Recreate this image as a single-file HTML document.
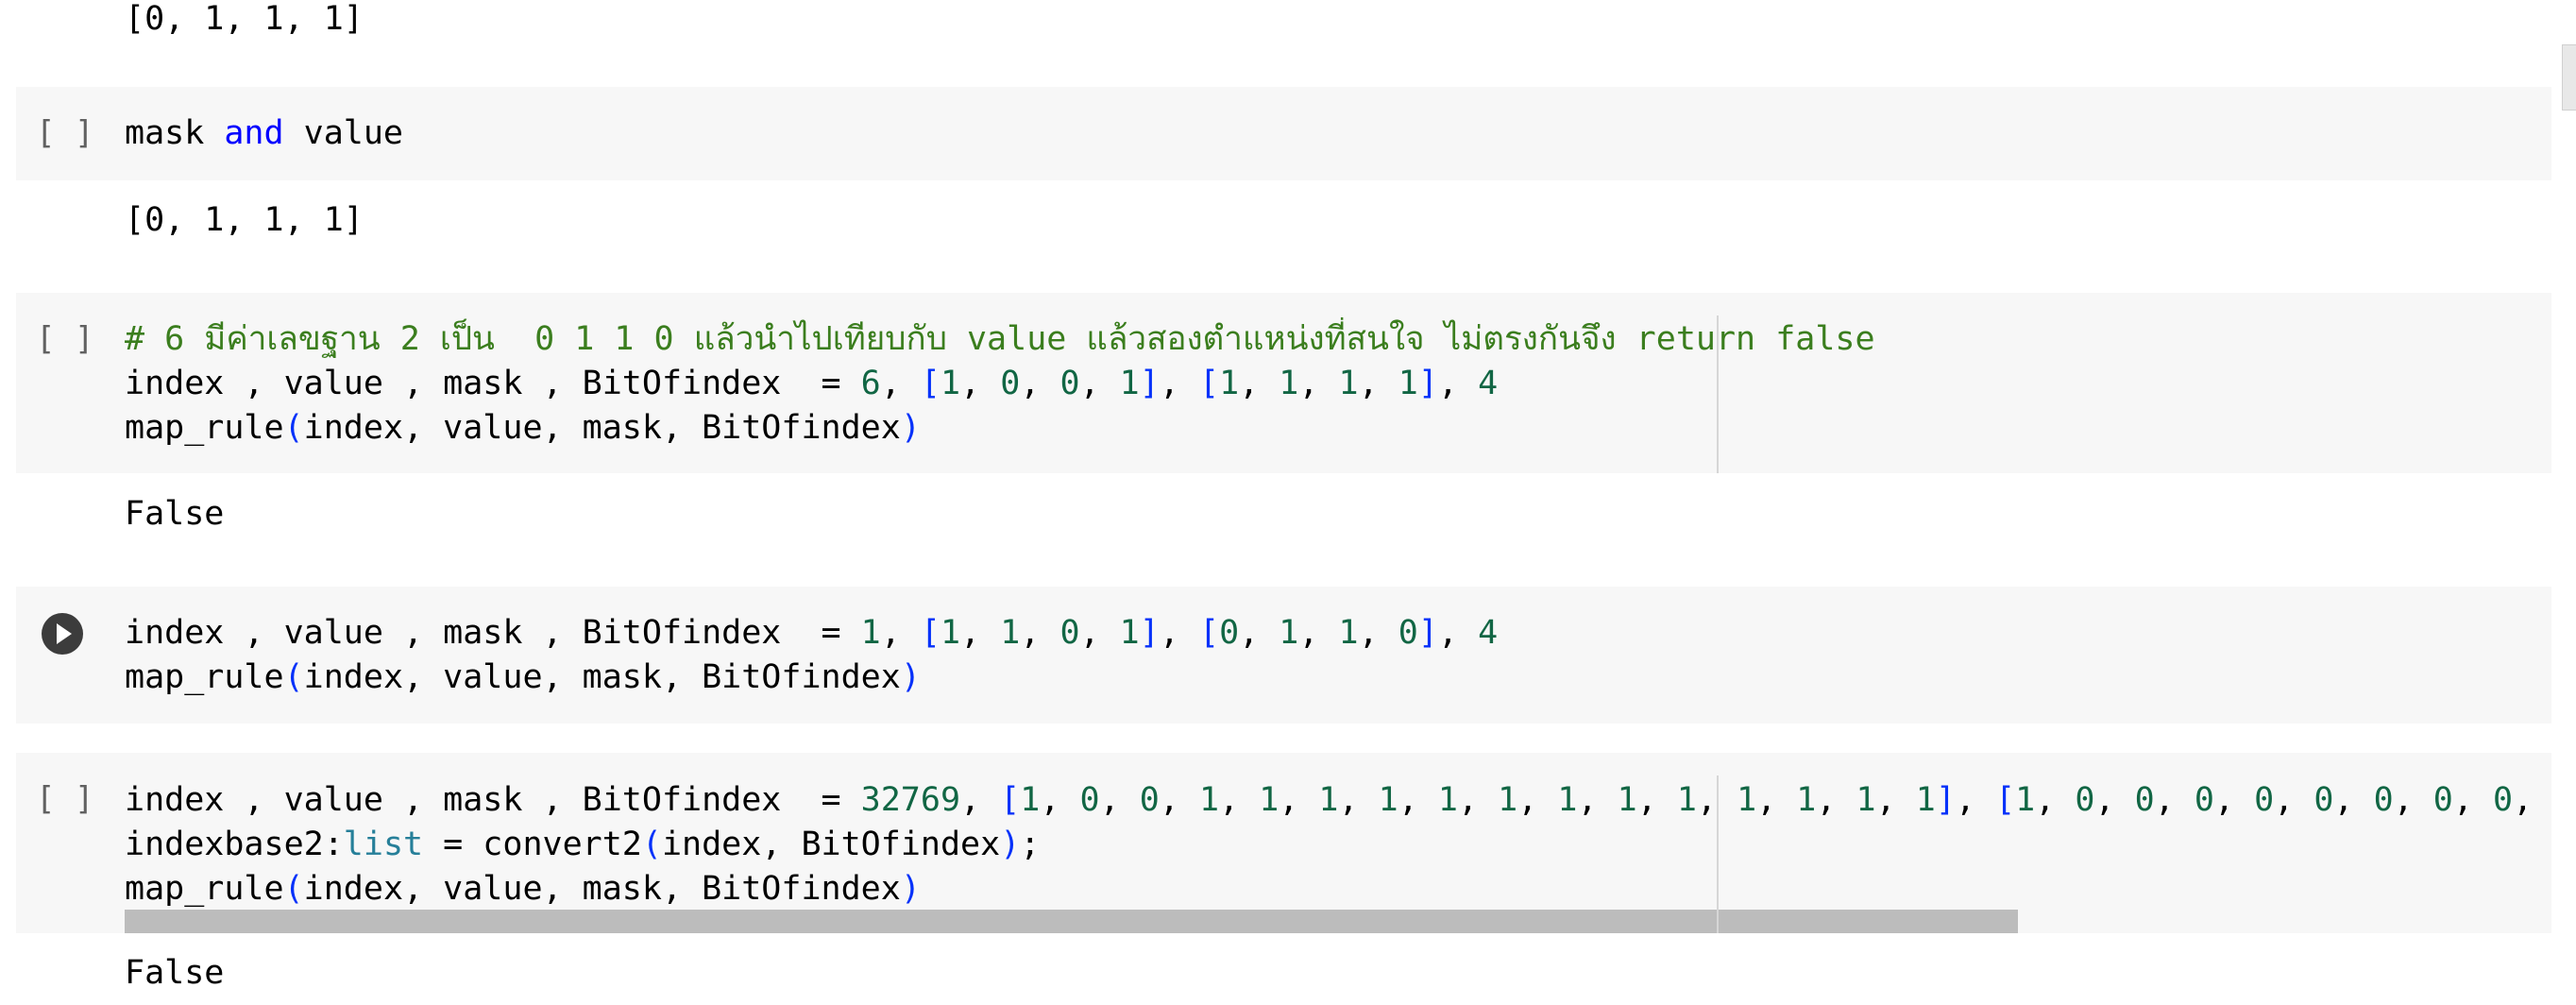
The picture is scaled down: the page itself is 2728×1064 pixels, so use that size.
<!DOCTYPE html>
<html><head><meta charset="utf-8"><style>
body{margin:0;width:2728px;height:1064px;background:#fff;position:relative;overflow:hidden;font-family:"DejaVu Sans Mono","Liberation Mono",monospace;font-size:35px;color:#000}
.bg{position:absolute;left:17px;width:2685px;background:#f7f7f7}
.l{position:absolute;left:132px;height:47px;line-height:47px;white-space:pre;width:2560px;overflow:hidden}
.g{position:absolute;left:38px;color:#616161;line-height:47px;white-space:pre;font-size:34px}
.k{color:#0000ff}.n{color:#116644}.b{color:#0431fa}.c{color:#3b7e1e}.t{color:#267f99}
.cur{position:absolute;left:1818px;width:2px;background:#d6d6d6}
</style></head><body>
<div class="l" style="top:-3px">[0, 1, 1, 1]</div>

<div class="bg" style="top:92px;height:99px"></div>
<div class="g" style="top:118px">[ ]</div>
<div class="l" style="top:118px">mask <span class="k">and</span> value</div>
<div class="l" style="top:210px">[0, 1, 1, 1]</div>

<div class="bg" style="top:310px;height:191px"></div>
<div class="cur" style="top:334px;height:167px"></div>
<div class="g" style="top:336px">[ ]</div>
<div class="l c" style="top:336px;font-family:'DejaVu Sans Mono','Noto Sans CJK SC',monospace"># 6 มีค่าเลขฐาน 2 เป็น  0 1 1 0 แล้วนำไปเทียบกับ value แล้วสองตำแหน่งที่สนใจ ไม่ตรงกันจึง return false</div>
<div class="l" style="top:383px">index , value , mask , BitOfindex  = <span class="n">6</span>, <span class="b">[</span><span class="n">1</span>, <span class="n">0</span>, <span class="n">0</span>, <span class="n">1</span><span class="b">]</span>, <span class="b">[</span><span class="n">1</span>, <span class="n">1</span>, <span class="n">1</span>, <span class="n">1</span><span class="b">]</span>, <span class="n">4</span></div>
<div class="l" style="top:430px">map_rule<span class="b">(</span>index, value, mask, BitOfindex<span class="b">)</span></div>
<div class="l" style="top:521px">False</div>

<div class="bg" style="top:621px;height:145px"></div>
<svg style="position:absolute;left:43px;top:648px" width="46" height="46" viewBox="0 0 46 46"><circle cx="23" cy="23" r="22" fill="#3c3c3c"/><path d="M17 12 L33 23 L17 34 Z" fill="#fff"/></svg>
<div class="l" style="top:647px">index , value , mask , BitOfindex  = <span class="n">1</span>, <span class="b">[</span><span class="n">1</span>, <span class="n">1</span>, <span class="n">0</span>, <span class="n">1</span><span class="b">]</span>, <span class="b">[</span><span class="n">0</span>, <span class="n">1</span>, <span class="n">1</span>, <span class="n">0</span><span class="b">]</span>, <span class="n">4</span></div>
<div class="l" style="top:694px">map_rule<span class="b">(</span>index, value, mask, BitOfindex<span class="b">)</span></div>

<div class="bg" style="top:797px;height:191px"></div>
<div class="g" style="top:823px">[ ]</div>
<div class="l" style="top:824px">index , value , mask , BitOfindex  = <span class="n">32769</span>, <span class="b">[</span><span class="n">1</span>, <span class="n">0</span>, <span class="n">0</span>, <span class="n">1</span>, <span class="n">1</span>, <span class="n">1</span>, <span class="n">1</span>, <span class="n">1</span>, <span class="n">1</span>, <span class="n">1</span>, <span class="n">1</span>, <span class="n">1</span>, <span class="n">1</span>, <span class="n">1</span>, <span class="n">1</span>, <span class="n">1</span><span class="b">]</span>, <span class="b">[</span><span class="n">1</span>, <span class="n">0</span>, <span class="n">0</span>, <span class="n">0</span>, <span class="n">0</span>, <span class="n">0</span>, <span class="n">0</span>, <span class="n">0</span>, <span class="n">0</span>,</div>
<div class="l" style="top:871px">indexbase2:<span class="t">list</span> = convert2<span class="b">(</span>index, BitOfindex<span class="b">)</span>;</div>
<div class="l" style="top:918px">map_rule<span class="b">(</span>index, value, mask, BitOfindex<span class="b">)</span></div>
<div style="position:absolute;left:132px;top:963px;width:2005px;height:25px;background:#bcbcbc"></div>
<div class="cur" style="top:821px;height:167px"></div>
<div class="l" style="top:1007px">False</div>

<div style="position:absolute;left:2713px;top:47px;width:15px;height:68px;background:#e8e8e8;border:1px solid #d0d0d0"></div>
</body></html>
